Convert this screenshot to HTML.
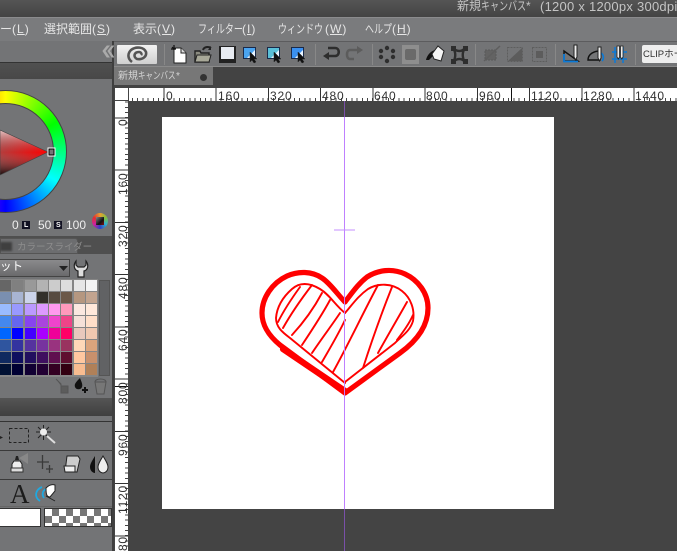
<!DOCTYPE html>
<html style="width:677px;height:551px;overflow:hidden"><head><meta charset="utf-8"><style>
*{box-sizing:border-box}
html,body{margin:0;padding:0}
body{width:677px;height:551px;overflow:hidden;position:relative;background:#737476;font-family:"Liberation Sans","Noto Sans CJK JP",sans-serif}
.a{position:absolute}
.t{position:absolute;white-space:nowrap;line-height:1}
.r{font-size:12px;letter-spacing:.8px;color:#333;top:90px}
.v{font-size:12px;letter-spacing:.8px;color:#333;left:117px;transform-origin:0 0;transform:rotate(-90deg)}
.m{font-size:12px;color:#e6e6e6;top:23px}
.m u{text-underline-offset:1px}
.m b{font-weight:normal;letter-spacing:1px}
.k{display:inline-block;transform:scaleX(.75);transform-origin:0 0}
</style></head><body>
<!-- title -->
<div class="a" style="left:0;top:0;width:677px;height:17px;background:linear-gradient(#555,#444)"></div>
<div class="t" style="left:457px;top:0;font-size:12px;color:#c4c4c4;line-height:13px">新規<span class="k" style="width:45px">キャンバス</span>*</div>
<div class="t" style="left:540px;top:0;font-size:13px;color:#c4c4c4;line-height:13px;letter-spacing:.25px">(1200 x 1200px 300dpi</div>
<!-- menu -->
<div class="a" style="left:0;top:17px;width:677px;height:24px;background:#7a7b7d;border-top:1px solid #8b8b8d"></div>
<div class="t m" style="left:0">ー<b>(<u>L</u>)</b></div>
<div class="t m" style="left:44px">選択範囲<b>(<u>S</u>)</b></div>
<div class="t m" style="left:133px">表示<b>(<u>V</u>)</b></div>
<div class="t m" style="left:198px"><span class="k" style="width:44px">フィルター</span><b>(<u>I</u>)</b></div>
<div class="t m" style="left:278px"><span class="k" style="width:47px">ウィンドウ</span><b>(<u>W</u>)</b></div>
<div class="t m" style="left:365px"><span class="k" style="width:27px">ヘルプ</span><b>(<u>H</u>)</b></div>
<!-- toolbar bg -->
<div class="a" style="left:114px;top:41px;width:563px;height:26px;background:#737476;border-top:1px solid #5c5c5e"></div>
<div class="a" style="left:114px;top:66px;width:563px;height:22px;background:#434343;border-top:1px solid #8a8a8a"></div>
<div class="a" style="left:114px;top:67px;width:99px;height:18px;background:#777;"></div>
<div class="t" style="left:118px;top:72px;font-size:10px;color:#d4d4d4;">新規<span class="k" style="width:38px">キャンバス</span>*</div>
<div class="a" style="left:200px;top:74px;width:7px;height:7px;border-radius:50%;background:#333"></div>
<!-- CLIP button -->
<div class="a" style="left:117px;top:45px;width:40px;height:19px;background:linear-gradient(#f2f2f2,#cfcfcf);border-radius:1px"></div>
<svg class="a" style="left:0;top:0" width="677" height="68" viewBox="0 0 677 68">
<path d="M132 62C128 59 127 54 131 50C136 46 144 47 146 52C147 57 142 60 137 59C133 57 134 52 139 52C141 52 142 54 141 55" fill="none" stroke="#555" stroke-width="2.6"/>
<g stroke="#888" fill="none"><path d="M164.500 44v21M315.500 44v21M372.500 44v21M475.500 44v21M555.500 44v21M635.500 44v21"/></g>
<!-- new -->
<path d="M174 48h7l5 5v10h-12z" fill="#fff" stroke="#222"/><path d="M181 48v5h5" fill="#ddd" stroke="#222"/><path d="M172 47l2 2M174 45v5M171 49h5" stroke="#111" stroke-width="1.2"/>
<!-- open -->
<path d="M195 62V51h5l1 2h8v9z" fill="#8b8b80" stroke="#222" stroke-width="1.400"/><path d="M195 62l2-7h14l-2 7z" fill="#a8a898" stroke="#222"/><path d="M203 50c1-3 5-4 8-2" fill="none" stroke="#222" stroke-width="2"/><path d="M211 46v4h-3z" fill="#222"/>
<!-- save -->
<rect x="219" y="46" width="17" height="17" fill="#222"/><rect x="221" y="47" width="13" height="12" fill="#e8ecf2"/>
<!-- export -->
<g><rect x="243.500" y="47.500" width="12" height="11" fill="#e8f4ff" stroke="#1a2a4a"/><path d="M244 48h11v2l-8 8h-3z" fill="#4aa4f0"/><path d="M250 52l7 7-3 0 2 3-2 1-2-3-2 2z" fill="#111" stroke="#222" stroke-width=".5"/></g>
<g transform="translate(24)"><rect x="243.500" y="47.500" width="12" height="11" fill="#e8f4ff" stroke="#1a2a4a"/><path d="M244 48h11v2l-8 8h-3z" fill="#5ac0d8"/><path d="M250 52l7 7-3 0 2 3-2 1-2-3-2 2z" fill="#111" stroke="#222" stroke-width=".5"/></g>
<g transform="translate(48)"><rect x="243.500" y="47.500" width="12" height="11" fill="#e8f4ff" stroke="#1a2a4a"/><path d="M244 48h11v2l-8 8h-3z" fill="#3a90f0"/><path d="M250 52l7 7-3 0 2 3-2 1-2-3-2 2z" fill="#111" stroke="#222" stroke-width=".5"/></g>
<!-- undo redo -->
<path d="M328 48h7c5 0 5 8 0 8h-8" fill="none" stroke="#2d2d2d" stroke-width="2.600"/>
<path d="M329 52v8l-6-4z" fill="#2d2d2d"/>
<path d="M358 50h-8c-4 0-4 9 0 9h4" fill="none" stroke="#5c5c5c" stroke-width="2.600"/>
<path d="M357 46v8l6-4z" fill="#5c5c5c"/>
<!-- dots -->
<g fill="#2e2e2e"><circle cx="387" cy="48" r="2.2"/><circle cx="381" cy="51" r="2.2"/><circle cx="393" cy="51" r="2.2"/><circle cx="381" cy="57" r="2.2"/><circle cx="393" cy="57" r="2.200"/><circle cx="387" cy="61" r="2.200"/></g>
<rect x="402" y="45" width="17" height="19" fill="#8e8e8e"/><rect x="405" y="49" width="11" height="11" rx="2" fill="#6a6a6a"/>
<!-- fill bucket -->
<path d="M426 60c1-5 5-9 9-10l3 2-6 5-3 3z" fill="#111"/><path d="M432 54l6-8 6 5-3 10-7-2z" fill="#f4f4f4" stroke="#222"/>
<!-- transform -->
<path d="M453 48c4 4 9 4 12 0c-3 4-3 10 0 14c-3-4-8-4-12 0c3-4 3-10 0-14z" fill="none" stroke="#2e2e2e" stroke-width="2.400"/><g fill="#2e2e2e"><rect x="451" y="46" width="5" height="5"/><rect x="463" y="46" width="5" height="5"/><rect x="451" y="59" width="5" height="5"/><rect x="463" y="59" width="5" height="5"/></g>
<!-- grey -->
<rect x="485" y="50" width="11" height="10" fill="#636363" stroke="#5a5a5a" stroke-dasharray="2 1"/><path d="M484 61l16-15" stroke="#5e5e5e" stroke-width="1.500"/>
<path d="M507.500 47.500h15v14h-15z" fill="none" stroke="#5e5e5e" stroke-dasharray="2 1"/><path d="M508 61l14-13v13z" fill="#5c5c5c"/>
<rect x="532.500" y="47.500" width="14" height="14" fill="none" stroke="#5e5e5e" stroke-dasharray="2 1"/><rect x="536" y="51" width="7" height="7" fill="#5c5c5c"/>
<!-- rulers -->
<path d="M564 51l14 10h-14z" fill="none" stroke="#111" stroke-width="1.400"/><path d="M564 54v7.500h14" fill="none" stroke="#0a7ad8" stroke-width="1.800"/><path d="M574 45h3v12l-1.500 3-1.500-3z" fill="#eee" stroke="#222"/>
<path d="M588 60c0-6 6-9 12-9v9z" fill="none" stroke="#111" stroke-width="1.400"/><path d="M601 53c3 2 3 6 1 8" fill="none" stroke="#0a7ad8" stroke-width="1.600"/><path d="M598 47h3v11l-1.500 3-1.500-3z" fill="#eee" stroke="#222"/>
<path d="M615 47v16M623 47v16M612 52h15M612 59h15" stroke="#0a7ad8" stroke-width="1.500" fill="none"/><path d="M617 46h2.500v11l-1.200 2-1.300-2zM620.500 46h2.500v11l-1.200 2-1.300-2z" fill="#eee" stroke="#222" stroke-width=".8"/>
</svg>
<div class="a" style="left:642px;top:45px;width:40px;height:18px;background:#eee;border-radius:2px"></div>
<div class="t" style="left:643px;top:50px;font-size:9.500px;color:#333">CLIPホー</div>
<!-- canvas area -->
<div class="a" style="left:114px;top:88px;width:563px;height:463px;background:#444"></div>
<div class="a" style="left:115px;top:88px;width:562px;height:13px;background:#fff;overflow:hidden">
 <div class="a" style="left:-4.250px;top:10px;width:580px;height:3px;background:repeating-linear-gradient(90deg,#444 0 1px,transparent 1px 5.225px)"></div>
 <div class="a" style="left:-4.250px;top:0;width:580px;height:13px;background:repeating-linear-gradient(90deg,#333 0 1px,transparent 1px 52.25px)"></div>
</div>
<div class="a" style="left:115px;top:101px;width:13px;height:450px;background:#fff;overflow:hidden">
 <div class="a" style="left:10px;top:-36.250px;width:3px;height:500px;background:repeating-linear-gradient(180deg,#444 0 1px,transparent 1px 5.225px)"></div>
 <div class="a" style="left:0;top:-36.250px;width:13px;height:500px;background:repeating-linear-gradient(180deg,#333 0 1px,transparent 1px 52.25px)"></div>
</div>
<div class="a" style="left:115px;top:88px;width:13px;height:13px;background:#fff"></div>
<div class="a" style="left:128px;top:88px;width:1px;height:13px;background:#444"></div>
<div class="a" style="left:115px;top:100px;width:13px;height:1px;background:#444"></div>
<div class="a" style="left:511px;top:88px;width:1px;height:13px;background:#111"></div>
<div class="a" style="left:115px;top:386px;width:13px;height:1px;background:#111"></div>
<div class="t r" style="left:166px">0</div><div class="t r" style="left:218px">160</div><div class="t r" style="left:270px">320</div><div class="t r" style="left:322px">480</div><div class="t r" style="left:374px">640</div><div class="t r" style="left:426px">800</div><div class="t r" style="left:479px">960</div><div class="t r" style="left:531px">1120</div><div class="t r" style="left:583px">1280</div><div class="t r" style="left:635px">1440</div>
<div class="t v" style="top:126px">0</div><div class="t v" style="top:195px">160</div><div class="t v" style="top:247px">320</div><div class="t v" style="top:299px">480</div><div class="t v" style="top:351px">640</div><div class="t v" style="top:404px">800</div><div class="t v" style="top:456px">960</div><div class="t v" style="top:514px">1120</div><div class="t v" style="top:566px">1280</div>
<div class="a" style="left:162px;top:117px;width:392px;height:392px;background:#fff"></div>
<svg class="a" style="left:0;top:0" width="677" height="551" viewBox="0 0 677 551">
<g fill="none" stroke="#f00" stroke-linejoin="round" stroke-linecap="round">
<path d="M345 302C338 295 330 283 322 278C312 271 298 271 287 276C272 283 262 298 262 313C262 325 268 335 280 345L345 393L400 353C418 340 428 325 428 308C428 293 418 280 405 274C392 268 378 270 367 277C358 284 352 293 345 302Z" stroke-width="5.200"/>
<path d="M283 349L345 391" stroke-width="6.200"/>
<path d="M345 313C335 305 330 295 320 289C310 283 300 282 292 289C284 296 277 306 276 318C276 327 282 332 290 338L345 383" stroke-width="1.900"/>
<path d="M345 313C352 305 358 296 368 289C378 283 392 283 402 291C411 298 415 310 413 321C410 331 402 336 395 343L345 382" stroke-width="1.900"/>
<path d="M278 322C284 310 292 298 300 287M283 328C292 312 302 298 312 285M292 335C304 322 314 308 322 293M302 345C312 330 322 315 330 300M312 353C322 338 332 325 340 313M322 362C330 348 338 335 345 320M333 372C348 345 362 315 378 285M363 368C372 340 382 312 392 287M378 353C388 335 398 318 407 302M397 340C403 332 409 324 413 315" stroke-width="1.900"/>
</g>
<path d="M344.500 101V551" stroke="#bf80ff" stroke-width="1"/>
<path d="M344.500 101V117M344.500 509V551" stroke="#7a50a8" stroke-width="1"/>
<path d="M334 230H355" stroke="#c58fff" stroke-width="1"/>
</svg>
<!-- left panel -->
<div class="a" style="left:0;top:41px;width:114px;height:510px;background:#737476;overflow:hidden;border-right:2px solid #3f3f3f">
 <div class="a" style="left:0;top:21px;width:112px;height:17px;background:linear-gradient(#505050,#484848);border-top:1px solid #333"></div>
</div>
<svg class="a" style="left:0;top:0" width="114" height="60"><path d="M107 46l-4 5 4 6h2l-4-6 4-5zM112 46l-4 5 4 6h1.500l-4-6 4-5z" fill="#aaa" stroke="#aaa"/></svg>
<!-- wheel -->
<div class="a" style="left:-56px;top:90px;width:123px;height:123px;border-radius:50%;background:conic-gradient(#ff0,#0f0 60deg,#0ff 120deg,#00f 180deg,#f0f 240deg,#f00 300deg,#ff0);border:1px solid #444"></div>
<div class="a" style="left:-43px;top:103px;width:97px;height:97px;border-radius:50%;background:#737476;border:1px solid #444"></div>
<svg class="a" style="left:0;top:0" width="114" height="240" viewBox="0 0 114 240">
<defs><linearGradient id="g1" x1="1" y1=".5" x2="0" y2=".5"><stop offset="0" stop-color="#f00"/><stop offset="1" stop-color="#b43c3c"/></linearGradient>
<linearGradient id="g2" x1="0" y1="0" x2="0" y2="1"><stop offset="0" stop-color="#fff" stop-opacity=".7"/><stop offset=".5" stop-color="#888" stop-opacity="0"/><stop offset="1" stop-color="#000" stop-opacity=".85"/></linearGradient></defs>
<path d="M0 130L48 152L0 175Z" fill="url(#g1)"/><path d="M0 130L48 152L0 175Z" fill="url(#g2)" stroke="#444" stroke-width=".6"/>
<rect x="49" y="149" width="5" height="6" fill="#777" stroke="#000" stroke-width="1"/><rect x="48" y="148" width="7" height="8" fill="none" stroke="#fff" stroke-width="1"/>
</svg>
<div class="a" style="left:92px;top:213px;width:16px;height:16px;border-radius:50%;background:conic-gradient(#e8a030,#80c040,#30b0d0,#3040c0,#d020a0,#e03030,#e8a030)"></div>
<div class="a" style="left:96px;top:217px;width:8px;height:8px;background:linear-gradient(135deg,#888,#111 60%,#811)"></div>
<div class="t" style="left:12px;top:219px;font-size:12px;color:#eee">0</div>
<div class="a" style="left:22px;top:221px;width:8px;height:8px;background:#112;"></div>
<div class="t" style="left:24px;top:222px;font-size:7px;font-weight:bold;color:#fff">L</div>
<div class="t" style="left:38px;top:219px;font-size:12px;color:#eee">50</div>
<div class="a" style="left:54px;top:221px;width:8px;height:8px;background:#112;"></div>
<div class="t" style="left:56px;top:222px;font-size:7px;font-weight:bold;color:#fff">S</div>
<div class="t" style="left:66px;top:219px;font-size:12px;color:#eee">100</div>
<!-- tabs -->
<div class="a" style="left:0;top:236px;width:112px;height:18px;background:#4f4f4f"></div>
<div class="a" style="left:0;top:238px;width:78px;height:16px;background:#6c6d6f;border:1px solid #555;border-radius:0 3px 0 0"></div>
<div class="a" style="left:0;top:242px;width:12px;height:9px;background:#3f3f3f;filter:blur(1px)"></div>
<div class="t" style="left:17px;top:243px;font-size:9.500px;color:#8d8d8d">カラースライダー</div>
<!-- dropdown -->
<div class="a" style="left:0;top:259px;width:70px;height:18px;background:linear-gradient(#8a8a8c,#6a6a6c);border:1px solid #444;border-left:0"></div>
<div class="t" style="left:0;top:262px;font-size:11.500px;color:#fff">ット</div>
<svg class="a" style="left:0;top:0" width="114" height="551" viewBox="0 0 114 551">
<path d="M59 266h9l-4.500 5z" fill="#222"/>
<path d="M76 261C73 265 74 270 78 271V277H84V271C88 270 89 265 86 261V265L84 267H78L76 265Z" fill="#ddd" stroke="#222" stroke-width="1.200"/>
<!-- bottom palette icons -->
<path d="M56 379l5 5v9h7v-7h-7" fill="#5c5c5c" stroke="#555"/>
<path d="M80 378c-4 4-6 6-5 9 1 3 6 3 7 0 1-3-1-6-2-9z" fill="#111"/><path d="M82 390h6M85 387v6" stroke="#111" stroke-width="2"/>
<path d="M95 382h11l-2 12h-7z" fill="#777" stroke="#555"/><path d="M95 382c0-4 11-4 11 0" fill="none" stroke="#555"/>
<!-- tools -->
<rect x="9.500" y="428.500" width="19" height="14" fill="none" stroke="#222" stroke-dasharray="3 2"/>
<path d="M0 436l3 1.500-3 1.500z" fill="#222"/>
<g stroke="#222" stroke-width="1"><path d="M36 432h15M43.500 425v15M38 427l11 11M49 427l-11 11"/></g><circle cx="43.500" cy="432" r="3.500" fill="#eee"/><path d="M47 436l8 7" stroke="#ddd" stroke-width="2"/>
<path d="M12 468h10v-4l-2-3h-6l-2 3z" fill="#eee" stroke="#222"/><path d="M15 460l1-4 2 0 1 4" fill="#222"/><path d="M19 458l9-5v11z" fill="#888"/><rect x="11" y="468" width="12" height="4" fill="#ddd" stroke="#333"/>
<path d="M42.500 455v14M37 462h12M49.500 465v8M46 469h7" stroke="#3a3a3a" stroke-width="1.300"/>
<path d="M67 456h11l2 3-3 13h-12z" fill="#ccc" stroke="#222"/><path d="M64 466h11v6h-10z" fill="#eee" stroke="#222"/>
<path d="M95 456c-3 5-5 8-5 11 0 4 3 6 5 6z" fill="#111"/><path d="M95 456c2 4 2 6 2 8s-1 8-2 9z" fill="#777"/><path d="M103 456c-3 5-5 8-5 11 0 4 3 6 5 6s5-2 5-6c0-3-2-6-5-11z" fill="#eee" stroke="#222"/>
<path d="M42 487c-7 3-8 10-2 14M46 489c-4 2-4 6-2 9" fill="none" stroke="#1fa8e0" stroke-width="1.800"/><path d="M46 488c3-3 6-4 9-3l0 6-5 6c-3 0-4-2-4-9z" fill="#fff" stroke="#222"/><path d="M46 496l9 5" stroke="#222"/>
</svg>
<!-- palette -->
<div class="a" style="left:0;top:279px;width:98px;height:98px;background:#858585"></div>
<div class="a" id="p" style="left:0;top:280px;width:98px;display:grid;grid-template-columns:repeat(8,11px);grid-auto-rows:11px;gap:1px 1.300px">
<i style="background:#666"></i><i style="background:#808080"></i><i style="background:#999"></i><i style="background:#b3b3b3"></i><i style="background:#ccc"></i><i style="background:#ddd"></i><i style="background:#e6e6e6"></i><i style="background:#f3f3f3"></i>
<i style="background:#7a8fb0"></i><i style="background:#a8b4d2"></i><i style="background:#ccd4ea"></i><i style="background:#33302a"></i><i style="background:#574b40"></i><i style="background:#6b5848"></i><i style="background:#b59780"></i><i style="background:#c2a48f"></i>
<i style="background:#9bf"></i><i style="background:#99f"></i><i style="background:#b9f"></i><i style="background:#d9f"></i><i style="background:#f9e"></i><i style="background:#f9b"></i><i style="background:#fbe8e0"></i><i style="background:#ffe8da"></i>
<i style="background:#48e"></i><i style="background:#66e"></i><i style="background:#84e"></i><i style="background:#a4d"></i><i style="background:#e4c"></i><i style="background:#e48"></i><i style="background:#f5e0d8"></i><i style="background:#ffdec8"></i>
<i style="background:#06f"></i><i style="background:#00f"></i><i style="background:#40f"></i><i style="background:#a0f"></i><i style="background:#e09"></i><i style="background:#f06"></i><i style="background:#e8c8bc"></i><i style="background:#f0c8b0"></i>
<i style="background:#2f559f"></i><i style="background:#33339f"></i><i style="background:#55339f"></i><i style="background:#77339f"></i><i style="background:#99337f"></i><i style="background:#99335f"></i><i style="background:#ffd8b8"></i><i style="background:#dca47c"></i>
<i style="background:#0f2a5f"></i><i style="background:#0f0f5f"></i><i style="background:#220f5f"></i><i style="background:#3f0f5f"></i><i style="background:#5f0f4f"></i><i style="background:#5f0f2f"></i><i style="background:#ffc8a0"></i><i style="background:#c8906c"></i>
<i style="background:#013"></i><i style="background:#003"></i><i style="background:#103"></i><i style="background:#203"></i><i style="background:#302"></i><i style="background:#301"></i><i style="background:#f8bc90"></i><i style="background:#b08058"></i>
</div>
<div class="a" style="left:99px;top:280px;width:11px;height:96px;background:#616264;border:1px solid #555"></div>
<!-- lower panel -->
<div class="a" style="left:0;top:398px;width:112px;height:18px;background:linear-gradient(#555,#3f3f3f)"></div>
<div class="a" style="left:0;top:421px;width:112px;height:1px;background:#333"></div>
<div class="a" style="left:0;top:450px;width:112px;height:1px;background:#3a3a3a"></div>
<div class="a" style="left:0;top:479px;width:112px;height:1px;background:#3a3a3a"></div>
<div class="a" style="left:0;top:506px;width:112px;height:1px;background:#666"></div>
<div class="t" style="left:10px;top:481px;font-size:27px;color:#1c1c1c;font-family:'Liberation Serif',serif">A</div>
<div class="a" style="left:0;top:508px;width:41px;height:19px;background:#fff;border:1px solid #333;border-left:0"></div>
<div class="a" style="left:44px;top:508px;width:68px;height:19px;border:1px solid #333;background:conic-gradient(#777 25%,#fff 0 50%,#777 0 75%,#fff 0) 0 0/14px 14px"></div>
</body></html>
